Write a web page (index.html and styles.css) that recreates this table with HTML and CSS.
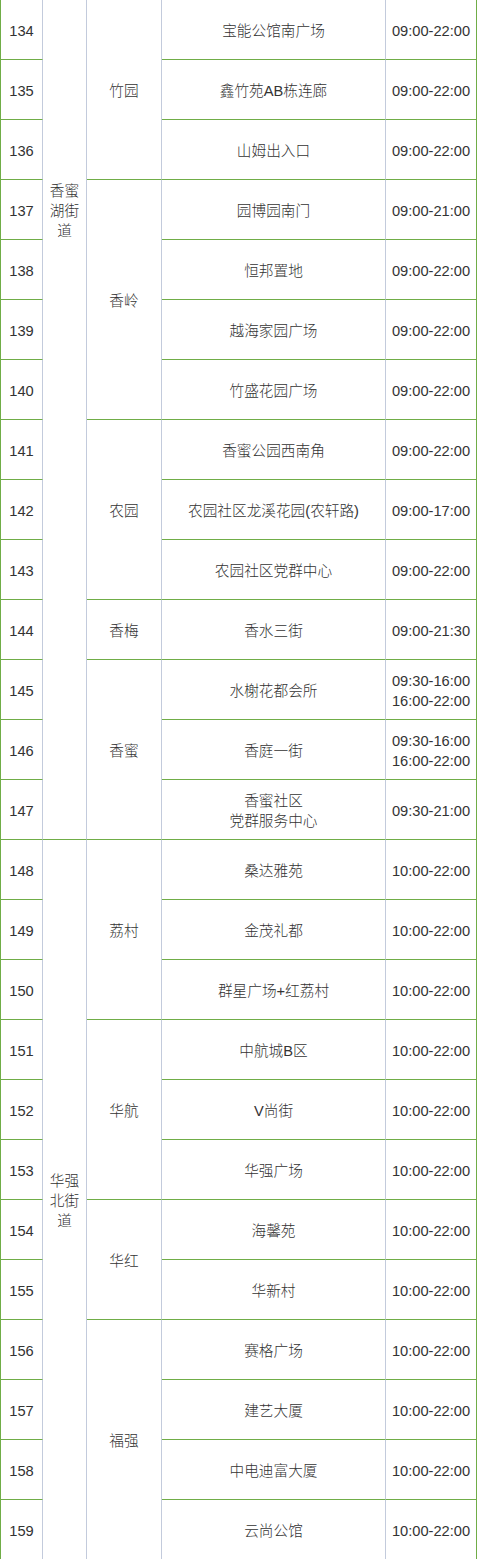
FILE: index.html
```html
<!DOCTYPE html>
<html lang="zh-CN">
<head>
<meta charset="UTF-8">
<meta name="viewport" content="width=device-width, initial-scale=1.0">
<title>核酸采样点</title>
<link rel="stylesheet" href="styles.css">
</head>
<body>
<table class="sites">
  <colgroup>
    <col class="c-no">
    <col class="c-street">
    <col class="c-comm">
    <col class="c-site">
    <col class="c-time">
  </colgroup>
  <tbody>
    <tr>
      <td>134</td>
      <td rowspan="14" class="street street-cut">香蜜湖街道</td>
      <td rowspan="3">竹园</td>
      <td>宝能公馆南广场</td>
      <td class="time">09:00-22:00</td>
    </tr>
    <tr><td>135</td><td>鑫竹苑AB栋连廊</td><td class="time">09:00-22:00</td></tr>
    <tr><td>136</td><td>山姆出入口</td><td class="time">09:00-22:00</td></tr>
    <tr>
      <td>137</td>
      <td rowspan="4">香岭</td>
      <td>园博园南门</td>
      <td class="time">09:00-21:00</td>
    </tr>
    <tr><td>138</td><td>恒邦置地</td><td class="time">09:00-22:00</td></tr>
    <tr><td>139</td><td>越海家园广场</td><td class="time">09:00-22:00</td></tr>
    <tr><td>140</td><td>竹盛花园广场</td><td class="time">09:00-22:00</td></tr>
    <tr>
      <td>141</td>
      <td rowspan="3">农园</td>
      <td>香蜜公园西南角</td>
      <td class="time">09:00-22:00</td>
    </tr>
    <tr><td>142</td><td>农园社区龙溪花园(农轩路)</td><td class="time">09:00-17:00</td></tr>
    <tr><td>143</td><td>农园社区党群中心</td><td class="time">09:00-22:00</td></tr>
    <tr>
      <td>144</td>
      <td>香梅</td>
      <td>香水三街</td>
      <td class="time">09:00-21:30</td>
    </tr>
    <tr>
      <td>145</td>
      <td rowspan="3">香蜜</td>
      <td>水榭花都会所</td>
      <td class="time">09:30-16:00<br>16:00-22:00</td>
    </tr>
    <tr><td>146</td><td>香庭一街</td><td class="time">09:30-16:00<br>16:00-22:00</td></tr>
    <tr><td>147</td><td>香蜜社区<br>党群服务中心</td><td class="time">09:30-21:00</td></tr>
    <tr>
      <td>148</td>
      <td rowspan="12" class="street">华强北街道</td>
      <td rowspan="3">荔村</td>
      <td>桑达雅苑</td>
      <td class="time">10:00-22:00</td>
    </tr>
    <tr><td>149</td><td>金茂礼都</td><td class="time">10:00-22:00</td></tr>
    <tr><td>150</td><td>群星广场+红荔村</td><td class="time">10:00-22:00</td></tr>
    <tr>
      <td>151</td>
      <td rowspan="3">华航</td>
      <td>中航城B区</td>
      <td class="time">10:00-22:00</td>
    </tr>
    <tr><td>152</td><td>V尚街</td><td class="time">10:00-22:00</td></tr>
    <tr><td>153</td><td>华强广场</td><td class="time">10:00-22:00</td></tr>
    <tr>
      <td>154</td>
      <td rowspan="2">华红</td>
      <td>海馨苑</td>
      <td class="time">10:00-22:00</td>
    </tr>
    <tr><td>155</td><td>华新村</td><td class="time">10:00-22:00</td></tr>
    <tr>
      <td>156</td>
      <td rowspan="4">福强</td>
      <td>赛格广场</td>
      <td class="time">10:00-22:00</td>
    </tr>
    <tr><td>157</td><td>建艺大厦</td><td class="time">10:00-22:00</td></tr>
    <tr><td>158</td><td>中电迪富大厦</td><td class="time">10:00-22:00</td></tr>
    <tr><td>159</td><td>云尚公馆</td><td class="time">10:00-22:00</td></tr>
  </tbody>
</table>
</body>
</html>
```

FILE: styles.css
```css
body, html {
  margin: 0;
  padding: 0;
  background: #fff;
}
.sites {
  width: 477px;
  table-layout: fixed;
  border-collapse: separate;
  border-spacing: 0;
  border-left: 1px solid #70ad47;
  font-family: "Liberation Sans", "Noto Sans CJK SC", sans-serif;
  font-size: 14.67px;
  font-weight: 300;
  line-height: 20px;
  color: #333;
}
.c-no { width: 42px; }
.c-street { width: 44px; }
.c-comm { width: 75px; }
.c-site { width: 224px; }
.c-time { width: 91px; }
.sites tr {
  height: 60px;
}
.sites td {
  padding: 2px 4px 0;
  text-align: center;
  vertical-align: middle;
  border-right: 1px solid #c3cbdc;
  border-bottom: 1px solid #70ad47;
}
.sites td.time {
  border-right-color: #70ad47;
  padding: 2px 2px 0;
}
.sites td.street-cut {
  vertical-align: top;
  padding-top: 181px;
}
```
